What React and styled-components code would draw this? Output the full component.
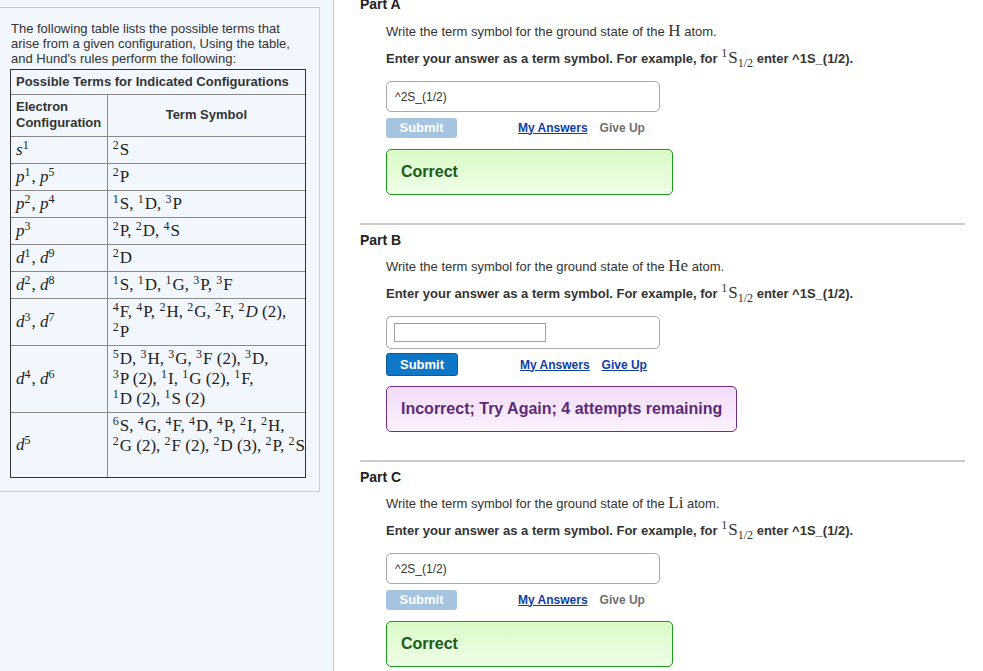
import React from "react";
import styled, { createGlobalStyle } from "styled-components";

const GlobalStyle = createGlobalStyle`
  html, body {
    margin: 0;
    padding: 0;
    background: #ffffff;
  }
  body {
    font-family: "Liberation Sans", Arial, sans-serif;
    color: #333333;
    overflow: hidden;
  }
`;

const Page = styled.div`
  display: flex;
  min-height: 100vh;
`;

const Sidebar = styled.aside`
  flex: 0 0 333px;
  background: #f2f7fe;
  border-right: 1px solid #c3ccd7;
`;

const InfoBox = styled.div`
  box-sizing: border-box;
  width: 321px;
  margin: 7px 0 0 -1px;
  padding: 13px 0 13px 10px;
  border: 1px solid #c3cdd9;
`;

const Intro = styled.p`
  margin: 0 0 3px 1px;
  font-size: 13px;
  line-height: 15px;
  white-space: nowrap;
`;

const TermTable = styled.table`
  width: 296px;
  border: 1px solid #333333;
  border-collapse: separate;
  border-spacing: 0;
  background: #f2f7fe;
`;

const HeadCell = styled.th`
  padding: ${(p) => (p.$tall ? "4px 5px 5px" : "4px 5px")};
  font-size: 13px;
  line-height: 16px;
  font-weight: bold;
  color: #333333;
  text-align: ${(p) => (p.$center ? "center" : "left")};
  border-bottom: 1px solid #8a8a8a;
  border-right: ${(p) => (p.$divider ? "1px solid #8a8a8a" : "none")};
  width: ${(p) => (p.$divider ? "88px" : "auto")};
`;

const ConfigCell = styled.td`
  width: 88px;
  padding: 3px 5px;
  border-right: 1px solid #8a8a8a;
  border-bottom: ${(p) => (p.$last ? "none" : "1px solid #8a8a8a")};
  vertical-align: middle;
  font-family: "Liberation Serif", "Times New Roman", serif;
  font-size: 17px;
  line-height: 20px;
  color: #222222;
  white-space: nowrap;
`;

const TermCell = styled.td`
  padding: ${(p) => (p.$last ? "3px 0 21px 5px" : "3px 0 3px 5px")};
  border-bottom: ${(p) => (p.$last ? "none" : "1px solid #8a8a8a")};
  vertical-align: top;
  font-family: "Liberation Serif", "Times New Roman", serif;
  font-size: 17px;
  line-height: 20px;
  color: #222222;
  white-space: nowrap;
`;

const Sup = styled.sup`
  font-size: 12px;
  line-height: 0;
  vertical-align: 6px;
  margin-right: 1px;
`;

const Sub = styled.sub`
  font-size: 12px;
  line-height: 0;
  vertical-align: -4px;
`;

const Var = styled.i`
  font-style: italic;
`;

const Main = styled.main`
  flex: 1;
  margin-top: -4px;
  padding: 0 18px 0 26px;
`;

const Part = styled.section`
  padding: ${(p) => (p.$first ? "0" : "7px")} 0 28px;
  border-top: ${(p) => (p.$first ? "none" : "2px solid #cccccc")};
`;

const PartLabel = styled.h2`
  margin: 0;
  font-size: 14px;
  line-height: 16px;
  font-weight: bold;
  color: #222222;
`;

const Prompt = styled.div`
  margin-left: 26px;
`;

const Line = styled.p`
  margin: ${(p) => p.$gap}px 0 0;
  height: 20px;
  font-size: 13px;
  line-height: 20px;
  font-weight: ${(p) => (p.$bold ? "bold" : "normal")};
  color: #333333;
  white-space: nowrap;
`;

const Serif = styled.span`
  font-family: "Liberation Serif", "Times New Roman", serif;
  font-size: 17px;
  line-height: 0;
  font-weight: normal;
`;

const AnswerBox = styled.div`
  box-sizing: border-box;
  display: flex;
  align-items: center;
  width: 274px;
  min-height: 31px;
  margin-top: 12px;
  padding: ${(p) => (p.$field ? "6px 7px" : "0 8px")};
  border: 1px solid #a9a9a9;
  border-radius: 5px;
  font-size: 12px;
  color: #333333;
  background: #ffffff;
`;

const TextField = styled.input`
  box-sizing: border-box;
  width: 152px;
  height: 19px;
  margin: 0;
  padding: 0 3px;
  border: 1px solid #a0a0a0;
  font-family: "Liberation Sans", Arial, sans-serif;
  font-size: 12px;
  outline: none;
`;

const ActionRow = styled.div`
  display: flex;
  align-items: center;
  height: 23px;
  margin-top: 4px;
`;

const SubmitButton = styled.button`
  box-sizing: border-box;
  width: ${(p) => (p.$active ? "72px" : "71px")};
  height: ${(p) => (p.$active ? "23px" : "20px")};
  padding: 0;
  border: ${(p) => (p.$active ? "1px solid #0b5a99" : "none")};
  border-radius: 3px;
  background: ${(p) => (p.$active ? "#0f77c8" : "#a4c4df")};
  color: #ffffff;
  font-family: "Liberation Sans", Arial, sans-serif;
  font-size: 13px;
  font-weight: bold;
  cursor: ${(p) => (p.$active ? "pointer" : "default")};
`;

const Links = styled.div`
  display: flex;
  gap: 12px;
  margin-left: ${(p) => (p.$active ? "62px" : "61px")};
`;

const ActionLink = styled.a`
  font-size: 12px;
  font-weight: bold;
  color: ${(p) => (p.$muted ? "#707070" : "#0d3ea6")};
  text-decoration: ${(p) => (p.$muted ? "none" : "underline")};
  cursor: pointer;
`;

const Feedback = styled.div`
  box-sizing: border-box;
  display: flex;
  align-items: center;
  width: fit-content;
  min-width: 287px;
  height: 46px;
  margin-top: 10px;
  padding: 0 14px;
  border-radius: 5px;
  font-size: 16px;
  font-weight: bold;
  border: 1px solid ${(p) => (p.$ok ? "#1e9b1e" : "#6f3188")};
  color: ${(p) => (p.$ok ? "#1b5b1b" : "#5b2b76")};
  background: ${(p) =>
    p.$ok
      ? "linear-gradient(to bottom, #dafac6, #effde8)"
      : "linear-gradient(to bottom, #f1dcf8, #fcf1fd)"};
`;

function math(str) {
  const out = [];
  const re = /\^(\d)|\*(\w)\*/g;
  let last = 0;
  let m;
  while ((m = re.exec(str))) {
    if (m.index > last) out.push(str.slice(last, m.index));
    if (m[1]) out.push(<Sup key={m.index}>{m[1]}</Sup>);
    else out.push(<Var key={m.index}>{m[2]}</Var>);
    last = re.lastIndex;
  }
  if (last < str.length) out.push(str.slice(last));
  return out;
}

const rows = [
  { config: "*s*^1", terms: ["^2S"] },
  { config: "*p*^1, *p*^5", terms: ["^2P"] },
  { config: "*p*^2, *p*^4", terms: ["^1S, ^1D, ^3P"] },
  { config: "*p*^3", terms: ["^2P, ^2D, ^4S"] },
  { config: "*d*^1, *d*^9", terms: ["^2D"] },
  { config: "*d*^2, *d*^8", terms: ["^1S, ^1D, ^1G, ^3P, ^3F"] },
  { config: "*d*^3, *d*^7", terms: ["^4F, ^4P, ^2H, ^2G, ^2F, ^2*D* (2),", "^2P"] },
  {
    config: "*d*^4, *d*^6",
    terms: ["^5D, ^3H, ^3G, ^3F (2), ^3D,", "^3P (2), ^1I, ^1G (2), ^1F,", "^1D (2), ^1S (2)"],
  },
  {
    config: "*d*^5",
    terms: ["^6S, ^4G, ^4F, ^4D, ^4P, ^2I, ^2H,", "^2G (2), ^2F (2), ^2D (3), ^2P, ^2S"],
  },
];

const parts = [
  { label: "Part A", atom: "H", answer: "^2S_(1/2)", state: "correct" },
  { label: "Part B", atom: "He", answer: null, state: "incorrect" },
  { label: "Part C", atom: "Li", answer: "^2S_(1/2)", state: "correct" },
];

const Question = ({ part, first }) => {
  const active = part.state === "incorrect";
  return (
    <Part $first={first}>
      <PartLabel>{part.label}</PartLabel>
      <Prompt>
        <Line $gap={first ? 10 : 9}>
          Write the term symbol for the ground state of the <Serif>{part.atom}</Serif> atom.
        </Line>
        <Line $gap={7} $bold>
          Enter your answer as a term symbol. For example, for{" "}
          <Serif>
            <Sup>1</Sup>S<Sub>1/2</Sub>
          </Serif>{" "}
          enter ^1S_(1/2).
        </Line>
        {part.answer ? (
          <AnswerBox>{part.answer}</AnswerBox>
        ) : (
          <AnswerBox $field>
            <TextField type="text" defaultValue="" />
          </AnswerBox>
        )}
        <ActionRow>
          <SubmitButton $active={active}>Submit</SubmitButton>
          <Links $active={active}>
            <ActionLink>My Answers</ActionLink>
            <ActionLink $muted={!active}>Give Up</ActionLink>
          </Links>
        </ActionRow>
        {active ? (
          <Feedback>Incorrect; Try Again; 4 attempts remaining</Feedback>
        ) : (
          <Feedback $ok>Correct</Feedback>
        )}
      </Prompt>
    </Part>
  );
};

export default function App() {
  return (
    <>
      <GlobalStyle />
      <Page>
        <Sidebar>
          <InfoBox>
            <Intro>
              The following table lists the possible terms that
              <br />
              arise from a given configuration, Using the table,
              <br />
              and Hund's rules perform the following:
            </Intro>
            <TermTable>
              <thead>
                <tr>
                  <HeadCell colSpan={2}>Possible Terms for Indicated Configurations</HeadCell>
                </tr>
                <tr>
                  <HeadCell $tall $divider>
                    Electron
                    <br />
                    Configuration
                  </HeadCell>
                  <HeadCell $tall $center>
                    Term Symbol
                  </HeadCell>
                </tr>
              </thead>
              <tbody>
                {rows.map((row, i) => {
                  const last = i === rows.length - 1;
                  return (
                    <tr key={row.config}>
                      <ConfigCell $last={last}>{math(row.config)}</ConfigCell>
                      <TermCell $last={last}>
                        {row.terms.map((t, j) => (
                          <div key={j}>{math(t)}</div>
                        ))}
                      </TermCell>
                    </tr>
                  );
                })}
              </tbody>
            </TermTable>
          </InfoBox>
        </Sidebar>
        <Main>
          {parts.map((p, i) => (
            <Question key={p.label} part={p} first={i === 0} />
          ))}
        </Main>
      </Page>
    </>
  );
}
